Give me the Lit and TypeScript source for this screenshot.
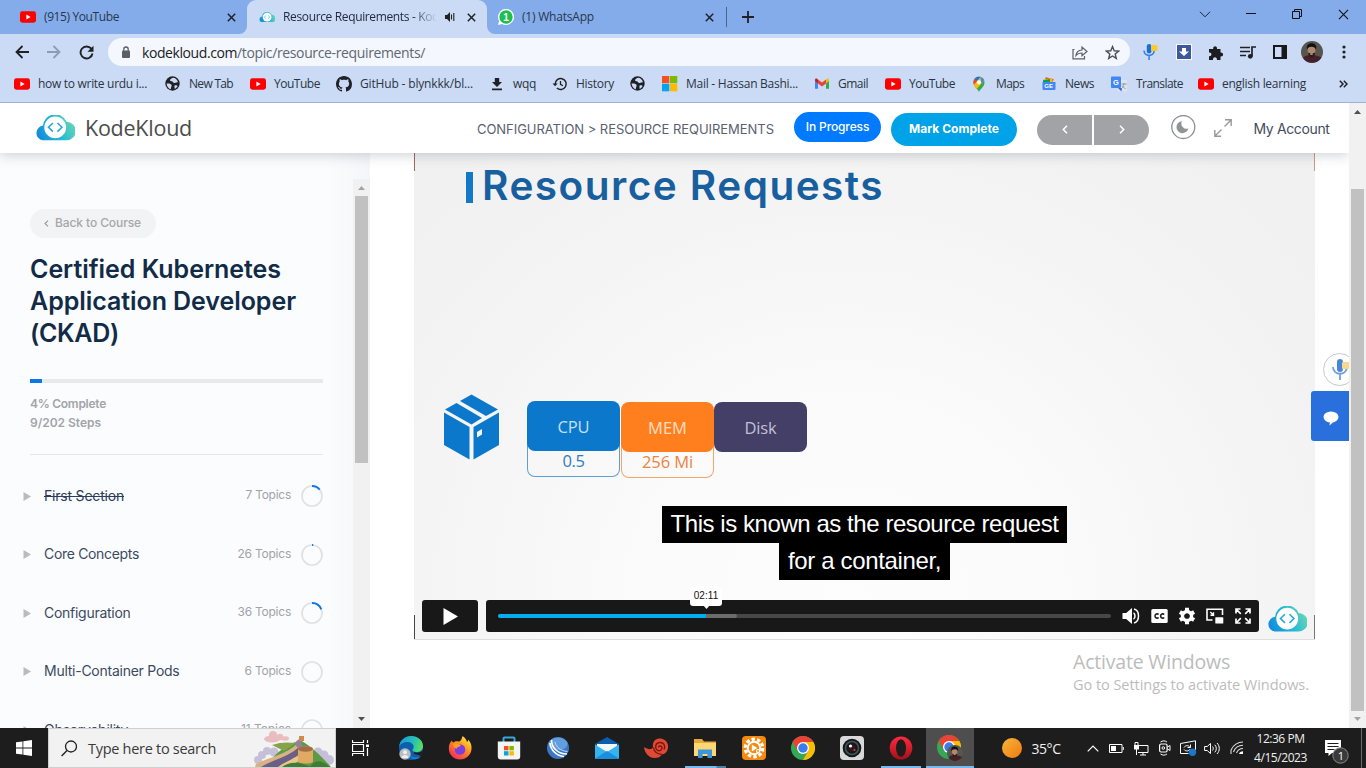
import { LitElement, html, css, svg } from "lit";
import { customElement, property } from "lit/decorators.js";

/** One line of text whose tracking is adjusted so that it spans `w` pixels. */
@customElement("fit-line")
class FitLine extends LitElement {
  @property({ type: Number }) w = 0;
  static styles = css`
    :host { display: inline-block; white-space: nowrap; flex: none; }
  `;
  firstUpdated() {
    const span = this.renderRoot.querySelector("span")!;
    const n = (this.textContent || "").length || 1;
    const natural = span.getBoundingClientRect().width;
    this.style.letterSpacing = `${(this.w - natural) / n}px`;
    this.style.width = `${this.w}px`;
  }
  render() {
    return html`<span><slot></slot></span>`;
  }
}

const icon = (w: number, h: number, body: unknown, vb = `0 0 ${w} ${h}`) =>
  html`<svg width=${w} height=${h} viewBox=${vb} fill="none">${body}</svg>`;

const youtube = () => icon(16, 16, svg`<rect y="2.3" width="16" height="11.4" rx="2.4" fill="#f00"/><path d="M6.4 5.6v4.8L10.6 8z" fill="#fff"/>`);
const globe = () => icon(16, 16, svg`<circle cx="7.500" cy="7.500" r="7.200" fill="#202124"/><path d="M1.600 7.600c2.600-.4 4.600.2 5 1.700.2 1.300-.6 1.500-.6 2.700 0 .8-.3 1.200-.8 1.200C3.300 12.500 1.800 10.300 1.600 7.600zM8 1.700c-1.600.5-3.400 1.600-3 2.800.6 1.200 2.500.2 3 1.500.4 1.200 2 1.300 3.200.6.8-.4 1.300-.2 1.700-.6C12.200 3.500 10.300 1.700 8 1.700zM9.400 9.800c1.400-.8 2.800-.4 3.200.2-.6 1.400-1.800 2.400-3 2.800z" fill="#cbdbf5"/>`);
const github = () => icon(16, 16, svg`<path fill="#1f2328" d="M8 0C3.580 0 0 3.580 0 8c0 3.540 2.290 6.530 5.470 7.590.4.070.55-.17.55-.38 0-.19-.01-.82-.01-1.490-2.010.37-2.530-.49-2.690-.94-.09-.23-.48-.94-.82-1.130-.28-.15-.68-.52-.01-.53.63-.01 1.080.58 1.230.82.72 1.210 1.870.87 2.330.66.070-.52.28-.87.51-1.070-1.780-.2-3.640-.89-3.640-3.950 0-.87.31-1.590.82-2.150-.08-.2-.36-1.020.08-2.120 0 0 .67-.21 2.200.82.64-.18 1.320-.27 2-.27s1.360.09 2 .27c1.530-1.040 2.200-.82 2.200-.82.44 1.100.16 1.920.08 2.120.51.56.82 1.270.82 2.150 0 3.070-1.870 3.750-3.650 3.950.29.25.54.73.54 1.480 0 1.070-.01 1.930-.01 2.200 0 .21.15.46.55.38A8.010 8.010 0 0 0 16 8c0-4.420-3.580-8-8-8z"/>`);
const download = () => icon(16, 16, svg`<path d="M5.800 2h4.400v4H13L8 11 3 6h2.800zM3 12.500h10v1.700H3z" fill="#202124"/>`);
const history = () => icon(16, 16, svg`<path d="M3.200 8a5.500 5.500 0 1 1 1.700 4" stroke="#202124" stroke-width="1.400"/><path d="M.5 7.500h5.200L3.100 10.300z" fill="#202124"/><path d="M8.500 5v3.400l2.400 1.400" stroke="#202124" stroke-width="1.300"/>`);
const microsoft = () => icon(16, 16, svg`<path fill="#f25022" d="M0 0h7.300v7.300H0z"/><path fill="#7fba00" d="M8 0h7.300v7.300H8z"/><path fill="#00a4ef" d="M0 8h7.300v7.300H0z"/><path fill="#ffb900" d="M8 8h7.300v7.300H8z"/>`);
const gmail = () => icon(16, 16, svg`<path d="M1 4.500v8.300h3V7.200z" fill="#4285f4"/><path d="M15 4.500v8.300h-3V7.200z" fill="#34a853"/><path d="M12 3.800v3.600l3-2.300V4c0-1.300-1.400-1.800-2.300-1z" fill="#fbbc04"/><path d="M4 7.400V3.600l4 3 4-3v3.800l-4 3z" fill="#ea4335"/><path d="M1 5v-1c0-1.300 1.400-1.800 2.300-1l.7.600v3.800z" fill="#c5221f"/>`);
const maps = () => icon(16, 16, svg`<path d="M7 16c-.7-3-5.500-5-5.500-9.600C1.500 3 4 .8 7 .8s5.500 2.200 5.500 5.600C12.500 11 7.700 13 7 16z" fill="#34a853"/><path d="M2.700 2.700 5.500 5 2 9C1 6.500 1.400 4.200 2.700 2.700z" fill="#ea4335"/><path d="M2.700 2.700C4 1 6.500.4 8.600 1L5.400 5z" fill="#1a73e8"/><path d="M8.600 1c1.700.5 3 1.700 3.600 3.200L4.700 13C3.700 11.600 2.400 10.300 1.900 8.800z" fill="#fbbc04"/><path d="M8.600 1c1.700.5 3 1.700 3.600 3.200L9 7.500z" fill="#4285f4"/><circle cx="7" cy="6.300" r="2.100" fill="#fff"/>`);
const news = () => icon(16, 16, svg`<path d="M4 2h8v6H4z" fill="#ea4335" transform="rotate(12 8 5)"/><path d="M2 3.400 11 2l1 5-9 2z" fill="#fbbc04"/><path d="M2 4.300 9 3v5H2z" fill="#0c9d58"/><path d="M1.500 6h13v7a1 1 0 0 1-1 1h-11a1 1 0 0 1-1-1z" fill="#4285f4"/><text x="3.300" y="12.400" font-size="6" font-weight="700" fill="#fff" font-family="Liberation Sans">GE</text>`);
const translate = () => icon(17, 16, svg`<rect x="6.500" y="4" width="9.500" height="11.500" rx="1" fill="#dfe3ea"/><rect x="0" y="0.500" width="10" height="11.500" rx="1" fill="#4285f4"/><path d="m7 12 3.500 3.500L11 12z" fill="#3367d6"/><text x="2" y="8.800" font-size="7.500" font-weight="700" fill="#fff" font-family="Liberation Sans">G</text><path d="M10.500 8h5M13 7v1c0 2-1.200 3.500-2.500 4.500M11 9.500c1 1.600 2 2.500 3.500 3" stroke="#8a93a3" stroke-width=".9"/>`);

const cloud = (w: number, h: number) => icon(w, h, svg`
  <defs>
    <linearGradient id="kk" x1="0" y1="23" x2="38" y2="4" gradientUnits="userSpaceOnUse"><stop offset="0" stop-color="#1384dc"/><stop offset=".5" stop-color="#1fb6da"/><stop offset="1" stop-color="#6ad8b2"/></linearGradient>
  </defs>
  <path d="M7.300 25.300A7.400 7.400 0 0 1 7.600 10.600A12.200 12.200 0 0 1 31 6.700A9.300 9.300 0 0 1 31 25.300z" fill="url(#kk)"/>
  <circle cx="19.700" cy="12.400" r="10.900" fill="#fff"/>
  <path d="m17.400 8-4.400 4.300 4.400 4.300M22 8l4.400 4.300-4.400 4.300" stroke="#27a9dc" stroke-width="1.600"/>`, "-0.5 0 40 25.500");

const cross = (s = 9, sw = 1.5, c = "#202124") => icon(s, s, svg`<path d="M.8.8 8.200 8.200M8.200.8.8 8.200" stroke=${c} stroke-width=${sw}/>`, "0 0 9 9");

const bookmarks: [() => unknown, string, number, number][] = [
  [youtube, "how to write urdu i...", 109, 151],
  [globe, "New Tab", 44, 85],
  [youtube, "YouTube", 46, 86],
  [github, "GitHub - blynkkk/bl...", 113, 153],
  [download, "wqq", 23, 63],
  [history, "History", 38, 78],
  [globe, "", 0, 32],
  [microsoft, "Mail - Hassan Bashi...", 112, 152],
  [gmail, "Gmail", 30, 71],
  [youtube, "YouTube", 46, 87],
  [maps, "Maps", 28, 69],
  [news, "News", 29, 70],
  [translate, "Translate", 47, 87],
  [youtube, "english learning", 84, 120],
];

const sections: [string, number, string, number, number, boolean][] = [
  ["First Section", 80, "7 Topics", 45.500, 0.14, true],
  ["Core Concepts", 95, "26 Topics", 53.500, 0.02, false],
  ["Configuration", 86.500, "36 Topics", 53.500, 0.19, false],
  ["Multi-Container Pods", 135.500, "6 Topics", 46.500, 0, false],
  ["Observability", 84, "11 Topics", 50, 0, false],
];

const chromeMark = svg`
  <circle cx="12" cy="12" r="12" fill="#34a853"/>
  <path d="M12 6h10.400A12 12 0 0 1 12 24l5.200-9z" fill="#fbbc04"/>
  <path d="M1.600 6 6.800 15 12 12 12 6 22.400 6A12 12 0 0 0 1.600 6z" fill="#ea4335"/>
  <circle cx="12" cy="12" r="6" fill="#fff"/><circle cx="12" cy="12" r="4.700" fill="#3b7ded"/>`;

const face = svg`
  <circle cx="11" cy="11" r="11" fill="#56564e"/>
  <path d="M2 17c3-3 5-3 9-3s6.500 1 9.500 2.500A11 11 0 0 1 2 17z" fill="#43202a"/>
  <ellipse cx="10.500" cy="9.500" rx="3.900" ry="5.300" fill="#b08871"/>
  <path d="M6 8.500C5 3.500 8 2 11 2.200c3.500.2 5 2.800 4 6.300-1-2-1.800-2.800-4.500-2.800S7 6.700 6 8.500z" fill="#15110f"/>
  <path d="M7 11.500c1 1 6 1 7.200 0-.2 3-1.700 5-3.600 5s-3.300-2-3.600-5z" fill="#2c1d18"/><ellipse cx="10.500" cy="13" rx="1.600" ry="1" fill="#b08871"/>`;

const apps: { art: unknown; bar?: string; active?: boolean }[] = [
  { art: icon(24, 24, svg`<defs><linearGradient id="eg" x1="2" y1="4" x2="23" y2="12" gradientUnits="userSpaceOnUse"><stop stop-color="#1a9fd9"/><stop offset=".6" stop-color="#2bc3b0"/><stop offset="1" stop-color="#5fe05a"/></linearGradient></defs><circle cx="12" cy="12" r="12" fill="#0e5eb0"/><path d="M0 11C1 4 6 0 12 0c7 0 12 4.500 12 10 0 4-3 6-6.500 6-3 0-4-1-4-2 0-.8 1.200-1.200 1.200-3C14.700 8 12 6 8.500 6 4.500 6 1 8 0 11z" fill="url(#eg)"/><path d="M15 16c3 1.500 7 .5 9-2-.5 2-1 3.500-2.500 5.500L15 18z" fill="#1d1d1d"/><path d="M8 13c0 5 4 8.500 8.500 8.500 2 0 4-.5 5.500-1.500-1 1.500-2 2.400-4 3C12 24 8 19 8 13z" fill="#1887d6"/><circle cx="6" cy="18" r="5.700" fill="#b9bcc0"/><circle cx="6" cy="16.200" r="2" fill="#eee"/><path d="M2.500 22c.5-4 6.500-4 7 0z" fill="#eee"/>`) },
  { art: icon(24, 24, svg`<defs><linearGradient id="ff" x1="20" y1="2" x2="5" y2="22" gradientUnits="userSpaceOnUse"><stop stop-color="#ffe23a"/><stop offset=".45" stop-color="#ff8a1f"/><stop offset="1" stop-color="#f42d5a"/></linearGradient></defs><path d="M14.500 0c3 2 4 4 4.500 6 1-.5 1.200-1.500 1-2.500 3 3 3.800 6 3.500 9.500C23 19 18 23.500 12 23.500S.8 19 .8 12.500C.8 9 2 6 4 4.500c0 1 .5 1.800 1.300 2C7 5 9 5 10.500 5.500c2 .5 3.500-3 4-5.500z" fill="url(#ff)"/><circle cx="12" cy="13.500" r="5.300" fill="#7a3fe0"/><path d="M5 8c3-1 5 0 7 .5 1 .5 1 1.500-.5 2-2 .7-3 1-3 2.500-1-.8-3.500-2-3.500-5z" fill="#ff9a22"/>`) },
  { art: icon(24, 24, svg`<path d="M6.500 6V2.500a1 1 0 0 1 1-1h9a1 1 0 0 1 1 1V6" stroke="#35a8dd" stroke-width="2"/><path d="M.8 5.500h22.400v15a3 3 0 0 1-3 3H3.800a3 3 0 0 1-3-3z" fill="#f4f4f4"/><path d="M7 10h4.500v4.300H7z" fill="#f25022"/><path d="M12.400 10h4.500v4.300h-4.500z" fill="#7fba00"/><path d="M7 15.200h4.500v4.300H7z" fill="#00a4ef"/><path d="M12.400 15.200h4.500v4.300h-4.500z" fill="#ffb900"/>`) },
  { art: icon(24, 24, svg`<circle cx="12" cy="12" r="11" fill="#3a78c6"/><ellipse cx="12" cy="8" rx="9.500" ry="6.500" fill="#629ddd"/><path d="M5.500 4c0 8 6.500 14 15.500 14M4 7c.5 7 6.500 13 14 13.500" stroke="#fff" stroke-width="1.600"/><path d="M9 6c1 5 5.500 9 12.500 9.500" stroke="#c4dcf4" stroke-width="1"/>`) },
  { art: icon(24, 24, svg`<path d="M0 8 12 1l12 7v3H0z" fill="#0b5cae"/><path d="M2 8h20v9H2z" fill="#f2f6fa"/><path d="M0 8.500 12 16l12-7.500V22a1 1 0 0 1-1 1H1a1 1 0 0 1-1-1z" fill="#35b4ee"/><path d="M0 22.500 12 15l12 7.500a1 1 0 0 1-1 .5H1z" fill="#1a8fdc"/>`) },
  { art: icon(24, 24, svg`<path d="M0 11c4 2.500 7 3 9 .5C8 5 12 2 17 2.500c5 1 7.500 5 7 9C23.500 16 21 18 18 18.500c-1.500 2.500-4 3.500-7.500 3.500C5 22 .5 17 0 11z" fill="#e04a35"/><path d="M9.500 11.500c.5 4 3 6.500 8.500 7M20 13.500c2-4-.5-7.500-4.500-7-4 .5-5 5-2.500 7.500 2.500 1.800 5.500 0 5-2.500-.5-2-3.500-2-3.500 0" stroke="#7d150f" stroke-width="1.400"/>`) },
  { art: icon(24, 24, svg`<path d="M1 3h8l2 2.500h12V20H1z" fill="#e8a93b"/><path d="M1 7h22v13H1z" fill="#fbd775"/><path d="M5 13.500h14V22h-4.500v-4h-5v4H5z" fill="#3c96dc"/>`), bar: "split" },
  { art: icon(24, 24, svg`<rect width="24" height="24" rx="4" fill="#f58a12"/><circle cx="12" cy="12" r="6.200" stroke="#fff" stroke-width="2"/><circle cx="12" cy="12" r="8.800" stroke="#fff" stroke-width="3.200" stroke-dasharray="3.400 2.130"/><path d="M9.800 8.500v7l5.500-3.500z" fill="#fff"/><circle cx="16" cy="15" r="2" fill="#fff"/><circle cx="16" cy="15" r=".9" fill="#f58a12"/>`) },
  { art: icon(24, 24, chromeMark) },
  { art: icon(24, 24, svg`<rect width="24" height="24" rx="4" fill="#d9d9d9"/><circle cx="12" cy="12" r="9.300" fill="#171717"/><circle cx="12" cy="12" r="6.500" stroke="#3d5a60" stroke-width="1.500"/><circle cx="12" cy="12" r="3.500" fill="#341719"/><circle cx="10.500" cy="10" r="1.600" fill="#fff"/><circle cx="14.500" cy="14" r="1" fill="#d3404a"/>`) },
  { art: icon(24, 24, svg`<defs><linearGradient id="op" x1="0" y1="0" x2="0" y2="1"><stop stop-color="#ff2b3d"/><stop offset="1" stop-color="#a80f1c"/></linearGradient></defs><ellipse cx="12" cy="12" rx="11.300" ry="11.500" fill="url(#op)"/><ellipse cx="12" cy="12" rx="5" ry="8.800" fill="#1d1d1d"/>`), bar: "mid" },
  { art: icon(26, 26, svg`<g>${chromeMark}</g><g transform="translate(10 10) scale(.73)">${face}</g>`), bar: "wide", active: true },
];

const wall = () => icon(80, 38, svg`
  <g fill="#e9bcc0"><ellipse cx="18" cy="10" rx="8" ry="3.500"/><circle cx="19" cy="6" r="4"/><circle cx="26" cy="8" r="3.200"/><ellipse cx="31" cy="9.500" rx="4" ry="2.200"/></g>
  <g fill="#c6bfd8"><circle cx="8" cy="26" r="4"/><circle cx="13" cy="22" r="4"/><circle cx="20" cy="23" r="4.500"/><circle cx="64" cy="23" r="4.500"/><circle cx="70" cy="26" r="4.500"/><circle cx="75" cy="31" r="5"/><circle cx="4" cy="31" r="4"/></g>
  <path d="M12 38C20 25 34 13 47 12c9 4 20 15 30 26z" fill="#5c9a46"/>
  <path d="M18 16c8-3 16-3 24-2L30 22z" fill="#87a34a"/>
  <path d="M2 35C16 28 33 25 44 14l3 2C39 27 22 30 10 38H1z" fill="#d9b184"/>
  <path d="M7 38C20 30 36 28 47 16l4 4C44 29 34 31 26 38z" fill="#6b5f86"/>
  <path d="M24 38c8-6 19-9 27-17l2 2c-5 8-12 11-17 15z" fill="#e9c58d"/>
  <path d="M41 14c2-3 6-6 9-4l-3 5 7 6-4 3-8-7z" fill="#8f8399"/><path d="M45 7h5v5h-5z" fill="#cf8b4c"/>
  <path d="M44 20c0-3.500 15-3.500 15 0v13c-3 2-12 2-15 0z" fill="#e0aa64"/><ellipse cx="51.500" cy="20" rx="7.500" ry="2.700" fill="#a36e45"/>
  <path d="M56 38c4-7 11-8 20 0z" fill="#3f7d35"/><path d="M28 38c5-4 14-6 24-2l6 2z" fill="#3f7d35"/>`);

const arrow = (dir: "up" | "down", c: string) =>
  icon(7, 4, dir === "up" ? svg`<path d="M0 4 3.500 0 7 4z" fill=${c}/>` : svg`<path d="M0 0h7L3.500 4z" fill=${c}/>`);

@customElement("app-root")
class AppRoot extends LitElement {
  static styles = css`
    :host { display: flex; flex-direction: column; width: 1366px; height: 768px; overflow: hidden; background: #fff; font-family: "Open Sans", "Noto Sans", sans-serif; font-size: 12px; color: #26303d; }
    * { box-sizing: border-box; }
    svg { display: block; flex: none; }
    .center { display: flex; align-items: center; justify-content: center; }

    .tabs { display: flex; height: 34px; background: #85acea; flex: none; }
    .tab { display: flex; align-items: center; height: 34px; flex: none; }
    .tab fit-line { margin-left: 8px; padding-bottom: 1px; color: #26374f; }
    .t1 { width: 247px; padding-left: 20px; border-bottom-right-radius: 8px; background: #85acea; }
    .t1 fit-line { margin-right: 108px; }
    .corner-bg { background: #cbdbf5; }
    .t2 { width: 240px; padding-left: 12px; background: #cbdbf5; border-radius: 9px 9px 0 0; }
    .t2wrap { background: #85acea; }
    .fade { margin-left: 8px; width: 154px; overflow: hidden; -webkit-mask-image: linear-gradient(90deg, #000 84%, transparent 100%); mask-image: linear-gradient(90deg, #000 84%, transparent 100%); }
    .fade fit-line { margin: 0; color: #202c3e; }
    .speaker { margin: 0 12px 0 8px; }
    .t3 { width: 239px; padding-left: 11px; border-bottom-left-radius: 8px; background: #85acea; }
    .t3 fit-line { margin-right: 111px; }
    .tabsep { width: 1px; height: 20px; margin: 7px 15px 0 0; background: #4a6593; }
    .newtab { margin-top: 11px; }
    .winbtns { display: flex; margin-left: auto; height: 28px; }
    .winbtns .center { width: 46px; }

    .toolbar { display: flex; align-items: center; height: 34px; padding: 2px 0 0 6px; background: #cbdbf5; flex: none; }
    .slot { width: 32px; height: 32px; }
    .omni { display: flex; align-items: center; width: 1022px; height: 28px; margin: 0 4px 0 6px; padding: 0 2px 0 13px; border-radius: 14px; background: #f4f7fd; font-size: 14px; color: #5f6873; }
    .omni .host { margin-left: 11px; color: #202124; }
    .omni .share { margin-left: auto; }
    .mic { margin-right: 2px; }

    .bookmarks { display: flex; align-items: center; height: 35px; padding: 0 0 2px 14px; background: #cbdbf5; border-bottom: 1px solid #9fb2d3; flex: none; color: #2a3442; }
    .bm { display: flex; align-items: center; gap: 8px; flex: none; }
    .bm fit-line { padding-bottom: 1px; }
    .more { margin-left: 21px; }

    .page { display: flex; height: 625px; flex: none; background: #fff; }
    .view { display: flex; flex-direction: column; width: 1349px; position: relative; overflow: hidden; font-family: Inter, sans-serif; }
    .pscroll { display: flex; flex-direction: column; align-items: center; width: 17px; background: #f1f1f1; padding: 7px 0; }
    .pscroll .thumb { width: 13px; height: 522px; margin: 75px 0 6px; background: #c1c1c1; }

    .head { display: flex; align-items: center; height: 50px; padding-left: 35px; background: #fff; box-shadow: 0 2px 12px rgba(30, 40, 60, .22); position: relative; z-index: 2; flex: none; }
    .brand { margin: 0 285px 0 10px; padding-bottom: 1px; font: 400 21.500px "Open Sans", sans-serif; color: #4c4c4c; }
    .crumb { font-size: 13px; color: #596170; padding-top: 2px; }
    .status { width: 87px; height: 30px; margin: 0 10px 2px 20px; padding-bottom: 1px; border-radius: 15px; background: #007bff; color: #fff; font-weight: 500; }
    .mark { width: 126px; height: 33px; margin-top: 2px; padding-bottom: 1px; border-radius: 17px; background: #00a2e8; color: #fff; font-weight: 700; }
    .pn { height: 30px; margin-top: 3px; background: #a2a3a6; }
    .prev { width: 55px; margin-left: 20px; margin-right: 2px; border-radius: 15px 0 0 15px; }
    .next { width: 55px; margin-right: 21px; border-radius: 0 15px 15px 0; }
    .expand { margin: 0 21.500px 0 18px; }
    .acct { font-size: 14px; color: #3f4c60; }

    .body { display: flex; height: 575px; flex: none; }
    .side { display: flex; width: 370px; height: 575px; overflow: hidden; background: linear-gradient(90deg, #fbfcfe 88%, #f4f6f9); flex: none; }
    .course { width: 353px; padding: 56px 30px 0; }
    .back { display: flex; align-items: center; width: 126px; height: 29px; padding: 0 0 1px 14px; border-radius: 15px; background: #f2f3f4; color: #a6a7ab; font-weight: 500; }
    .back fit-line { margin-left: 6px; padding-bottom: 1px; }
    .title { margin-top: 15px; font-size: 25px; font-weight: 600; line-height: 32px; color: #122b46; height: 96px; }
    .title fit-line { display: block; }
    .bar { height: 4px; margin-top: 30px; background: #e8e9eb; }
    .bar .fill { width: 12px; height: 4px; background: #0c77e8; }
    .meta { margin-top: 11px; height: 61px; line-height: 19px; font-weight: 600; color: #a2a4a9; border-bottom: 1px solid #e3e6ea; }
    .list { margin: 12px 0 0 -7px; width: 300px; }
    .row { display: flex; align-items: center; height: 58.500px; font-size: 14px; color: #3b4a60; }
    .row .name { margin-left: 13px; padding-bottom: 2px; }
    .row .done { text-decoration: line-through; color: #2b3d58; }
    .row .topics { margin-left: auto; margin-right: 10px; padding-bottom: 3px; font-size: 12px; color: #a1a3a8; }
    .sscroll { display: flex; flex-direction: column; align-items: center; width: 17px; margin-top: 26px; padding: 7px 0; background: #f1f1f1; height: 549px; }
    .sscroll .thumb { width: 13px; height: 267px; margin: 6px 0 auto; background: #c1c1c1; }

    .video { width: 901px; height: 487px; margin-left: 44px; padding-top: 9px; border-bottom: 1px solid #dedede; background: linear-gradient(#a4685a, #a4685a) 0 0 / 1px 18px no-repeat, linear-gradient(#d49a80, #d49a80) 100% 0 / 1px 18px no-repeat, linear-gradient(#444, #444) 0 100% / 1px 24px no-repeat, linear-gradient(#777, #777) 100% 100% / 1px 24px no-repeat, radial-gradient(ellipse 600px 560px at 48% 92%, #fdfdfd 0%, #fafafa 40%, #f4f4f4 72%, #f1f1f1 100%); }
    .slide { display: flex; height: 48px; align-items: center; padding-left: 52px; font-size: 40.500px; font-weight: 600; line-height: 48px; color: #175f9f; }
    .slide .stroke { width: 7px; height: 31px; margin: 3px 9px 0 0; background: #1478c8; }
    .res { display: flex; height: 90px; margin-top: 184px; padding-left: 30px; }
    .res .box { margin-right: 28px; }
    .chipcol { width: 93px; padding-top: 8px; }
    .chipcol.cpu { width: 94px; padding-top: 7px; }
    .chip { width: 93px; height: 50px; border-radius: 8px; font: 500 16.500px "Open Sans", sans-serif; position: relative; }
    .val { width: 93px; height: 34px; margin-top: -8px; padding-top: 1px; border: 1px solid; border-top: 0; border-radius: 0 0 8px 8px; font: 500 16.500px "Open Sans", sans-serif; }
    .cpu .chip { background: #0c78cb; color: #c4e0f5; }
    .cpu .val { border-color: #5a9fd6; color: #2f7dc0; }
    .mem .chip { background: #ff7f1e; color: #ffdfc2; }
    .mem .val { border-color: #f7a468; color: #ec8340; }
    .disk .chip { background: #443f66; color: #c2bfd6; }
    .capt { display: flex; flex-direction: column; align-items: center; height: 74px; margin-top: 22px; font: 24px "Liberation Sans", Arial, sans-serif; color: #fff; }
    .capt div { height: 37px; padding-bottom: 2px; background: #000; }
    .c1 { width: 405px; } .c2 { width: 171px; }
    .ctl { display: flex; height: 32px; margin-top: 20px; padding-left: 8px; }
    .play { width: 56px; border-radius: 3px; background: #181818; margin-right: 8px; }
    .scrub { display: flex; align-items: center; width: 773px; padding-left: 12px; border-radius: 3px; background: #181818; margin-right: 8px; }
    .track { display: flex; width: 613px; height: 4px; margin-right: 6px; border-radius: 2px; background: #474747; position: relative; flex: none; }
    .played { width: 208px; background: #00adef; border-radius: 2px 0 0 2px; }
    .buffered { width: 31px; background: #6c6c6c; border-radius: 0 2px 2px 0; }
    .tip { position: absolute; left: 192px; top: -28px; width: 32px; height: 20px; padding-bottom: 1px; border-radius: 3px; background: #fff; color: #111; font: 10px "Liberation Sans", sans-serif; }
    .tip svg { position: absolute; top: 19px; left: 12.500px; }
    .ci { width: 28px; }
    .brandv { padding-top: 6px; }

    .voice { position: absolute; left: 1323px; top: 250px; width: 33px; height: 33px; border: 1px solid #c8c8c8; border-radius: 50%; background: #fff; }
    .chat { position: absolute; left: 1311px; top: 288px; width: 38px; height: 50px; border-radius: 3px 0 0 3px; background: #2a70dd; padding: 5px 0 0 2px; }
    .activate { position: absolute; left: 1073px; top: 547px; display: flex; flex-direction: column; font-family: "Open Sans", sans-serif; color: #bcbcbc; }
    .a1 { font-size: 19.500px; line-height: 24px; }
    .a2 { font-size: 14.500px; line-height: 22px; }

    .task { display: flex; align-items: stretch; height: 40px; background: #1d1d1d; flex: none; color: #f0f0f0; }
    .start { width: 48px; }
    .search { display: flex; align-items: center; width: 288px; padding-left: 12px; border: 1px solid #cfcfcf; background: #f2f2f2; color: #3a3a3a; font-size: 14.500px; overflow: hidden; }
    .search fit-line { margin: 0 38px 0 11px; }
    .tview { width: 50.500px; padding-right: 2px; }
    .app { width: 49px; position: relative; }
    .app.active { width: 48px; background: #4e4e4e; }
    .u { position: absolute; bottom: 0; height: 2px; background: #76b9ed; }
    .u.split { left: 4px; width: 41px; background: linear-gradient(90deg, #76b9ed 31px, #4f7da3 32px); }
    .u.mid { left: 4.500px; width: 40px; }
    .u.wide { left: 0; width: 48px; }
    .weather { margin-left: 28px; }
    .temp { margin: 0 20px 0 10px; font-size: 14px; align-self: center; }
    .tray { display: flex; align-items: center; }
    .tray .center { width: 24px; }
    .clock { display: flex; flex-direction: column; align-items: center; width: 54px; margin-left: 5px; padding-top: 2px; line-height: 18.500px; font-size: 12px; }
    .note { margin-left: 17px; padding-top: 11px; }
    .edge { width: 1px; margin-left: auto; margin-right: 4px; background: #6a6a6a; }
  `;

  render() {
    return html`${this.browser()}
      <div class="page">
        <div class="view">
          ${this.header()}
          <div class="body">${this.sidebar()}${this.video()}</div>
          <div class="voice center">${icon(18, 22, svg`<rect x="6" y="0" width="6" height="13" rx="3" fill="#4a86d8"/><path d="M2 8c0 9 14 9 14 0M9 15v6" stroke="#6ea0e0" stroke-width="1.800"/><rect x="11" y="3" width="7" height="7" rx="1" fill="#f6d98a"/>`)}</div>
          <div class="chat center">${icon(16, 15, svg`<ellipse cx="8" cy="6" rx="7.500" ry="5.500" fill="#fff"/><path d="M7 10.500 6.500 14.500l5-4.500z" fill="#fff"/>`)}</div>
          <div class="activate"><fit-line class="a1" w="157">Activate Windows</fit-line><fit-line class="a2" w="236">Go to Settings to activate Windows.</fit-line></div>
        </div>
        <div class="pscroll">${arrow("up", "#505050")}<div class="thumb"></div>${arrow("down", "#a3a3a3")}</div>
      </div>
      ${this.taskbar()}`;
  }

  browser() {
    return html`
      <div class="tabs">
        <div class="corner-bg"><div class="tab t1">${youtube()}<fit-line w="75">(915) YouTube</fit-line>${cross()}</div></div>
        <div class="t2wrap"><div class="tab t2">${cloud(16, 10.500)}
          <div class="fade"><fit-line w="156">Resource Requirements - Kod</fit-line></div>
          <div class="speaker">${icon(10, 10, svg`<path d="M0 3h2l3-3v10L2 7H0z" fill="#202124"/><path d="M6.500 2.500v5M8.800 1v8" stroke="#202124" stroke-width="1.100"/>`)}</div>${cross()}</div></div>
        <div class="corner-bg"><div class="tab t3">${icon(16, 16, svg`<path d="M0 16 1.100 12A8 8 0 1 1 4 14.900z" fill="#fff"/><circle cx="8" cy="8" r="6.700" fill="#1fbf4f"/><text x="5.300" y="11.600" font-size="10" font-weight="700" fill="#fff" font-family="Liberation Sans">1</text>`)}<fit-line w="72">(1) WhatsApp</fit-line>${cross()}</div></div>
        <div class="tabsep"></div>
        <div class="newtab">${icon(12, 12, svg`<path d="M6 0v12M0 6h12" stroke="#202124" stroke-width="1.800"/>`)}</div>
        <div class="winbtns">
          <div class="center">${icon(12, 7, svg`<path d="m1 .8 5 5 5-5" stroke="#1a2536"/>`)}</div>
          <div class="center">${icon(10, 2, svg`<path d="M0 .5h10" stroke="#111"/>`)}</div>
          <div class="center">${icon(10, 10, svg`<path d="M.5 2.500h7v7h-7zM2.500 2.500v-2h7v7h-2" stroke="#111"/>`)}</div>
          <div class="center">${cross(11, 0.9, "#111")}</div>
        </div>
      </div>
      <div class="toolbar">
        <div class="slot center">${icon(14, 14, svg`<path d="M14 7H1.500M7.500 1l-6 6 6 6" stroke="#202124" stroke-width="1.800"/>`)}</div>
        <div class="slot center">${icon(14, 14, svg`<path d="M0 7h12.500M6.500 1l6 6-6 6" stroke="#8d9bb4" stroke-width="1.800"/>`)}</div>
        <div class="slot center">${icon(15, 15, svg`<path d="M12.300 3.700A6 6 0 1 0 13.500 8.500" stroke="#202124" stroke-width="1.900"/><path d="M14.500.8v6h-6z" fill="#202124"/>`)}</div>
        <div class="omni">
          ${icon(10, 13, svg`<rect x="1" y="4.500" width="8" height="7.500" rx="1" fill="#5a6068"/><path d="M2.800 5V3.200a2.200 2.200 0 0 1 4.400 0V5" stroke="#5a6068" stroke-width="1.300"/>`)}
          <fit-line class="host" w="95">kodekloud.com</fit-line><fit-line w="188">/topic/resource-requirements/</fit-line>
          <div class="slot center share">${icon(16, 15, svg`<path d="M2.500 4.500H1v9.300h11.500V11" stroke="#5a6068" stroke-width="1.200"/><path d="M4 10.500c.3-3.500 2.500-5.300 6-5.500V2l5 4.500-5 4.300V8C7.500 8 5.500 8.600 4 10.500z" stroke="#5a6068" stroke-width="1.200"/>`)}</div>
          <div class="slot center">${icon(15, 15, svg`<path d="m7.500 1.600 1.700 4.200 4.500.3-3.500 2.900 1.100 4.400-3.800-2.400-3.800 2.400L4.800 9 1.300 6.100l4.500-.3z" stroke="#4a5058" stroke-width="1.400"/>`)}</div>
        </div>
        <div class="slot center mic">${icon(15, 16, svg`<rect x="3.800" y="0" width="4.600" height="9.500" rx="2.300" fill="#1a6fe0"/><path d="M1 6.500c0 6.500 10.200 6.500 10.200 0M6.100 11.500V16" stroke="#2f7de4" stroke-width="1.500"/><rect x="8" y="1" width="6.500" height="6" rx="1" fill="#fccb27"/>`)}</div>
        <div class="slot center">${icon(16, 16, svg`<rect width="16" height="16" rx="1" fill="#fff"/><rect x="1" y="1" width="14" height="14" fill="#3c599e"/><path d="M6 4h4v3.500h3L8 12 3 7.500h3z" fill="#fff"/>`)}</div>
        <div class="slot center">${icon(16, 15, svg`<path d="M1 4h4.200C4.500.2 9.700.2 9 4H12.500v3.500c3.500-.3 3.500 4.300 0 4V15H9c.3-3.600-4.500-3.600-4 0H1v-3.800c3.300.3 3.300-4 0-3.700z" fill="#1b1d21"/>`)}</div>
        <div class="slot center">${icon(16, 13, svg`<path d="M0 1.500h10M0 5.500h10M0 9.500h6" stroke="#202124" stroke-width="1.700"/><path d="M12 10V1h4" stroke="#202124" stroke-width="1.700"/><circle cx="10.300" cy="10.300" r="2.400" fill="#202124"/>`)}</div>
        <div class="slot center">${icon(14, 14, svg`<path d="M1 1h12v12H1z" stroke="#16181c" stroke-width="2"/><path d="M8.500 0H14v14H8.500z" fill="#16181c"/>`)}</div>
        <div class="slot center">${icon(22, 22, face)}</div>
        <div class="slot center">${icon(4, 14, svg`<g fill="#202124"><circle cx="2" cy="2" r="1.600"/><circle cx="2" cy="7" r="1.600"/><circle cx="2" cy="12" r="1.600"/></g>`)}</div>
      </div>
      <div class="bookmarks">
        ${bookmarks.map(([art, label, w, span]) => html`<div class="bm" style="width:${span}px">${art()}${label ? html`<fit-line w=${w}>${label}</fit-line>` : ""}</div>`)}
        <div class="more">${icon(9, 8, svg`<path d="m.8.8 3.200 3.200L.8 7.200M4.800.8 8 4 4.800 7.200" stroke="#202124" stroke-width="1.500"/>`)}</div>
      </div>`;
  }

  header() {
    return html`<div class="head">
      ${cloud(40, 25.500)}
      <fit-line class="brand" w="107">KodeKloud</fit-line>
      <fit-line class="crumb" w="297">CONFIGURATION &gt; RESOURCE REQUIREMENTS</fit-line>
      <div class="status center"><fit-line w="63.500">In Progress</fit-line></div>
      <div class="mark center"><fit-line w="90">Mark Complete</fit-line></div>
      <div class="pn prev center">${icon(6, 9, svg`<path d="M5 .8 1.300 4.500 5 8.200" stroke="#fff" stroke-width="1.500"/>`)}</div>
      <div class="pn next center">${icon(6, 9, svg`<path d="m1 .8 3.700 3.700L1 8.200" stroke="#fff" stroke-width="1.500"/>`)}</div>
      ${icon(26, 26, svg`<circle cx="13.300" cy="12" r="11.500" stroke="#8d8e91" stroke-width="1.300"/><path d="M12 6.200a5.200 5.200 0 0 0 6.300 7.300A6 6 0 1 1 12 6.200z" fill="#929396"/>`)}
      <div class="expand">${icon(18, 18, svg`<path d="M11 .8h6.200V7M17 1l-6.500 6.500M7 17.200H.8V11M1 17l6.500-6.500" stroke="#98999c" stroke-width="1.400"/>`)}</div>
      <fit-line class="acct" w="76">My Account</fit-line>
    </div>`;
  }

  sidebar() {
    const c = 2 * Math.PI * 10;
    return html`<div class="side">
      <div class="course">
        <div class="back">${icon(5, 7, svg`<path d="M4 .6 1 3.500l3 2.900" stroke="#999" stroke-width="1.100"/>`)}<fit-line w="86">Back to Course</fit-line></div>
        <div class="title"><fit-line w="251">Certified Kubernetes</fit-line><fit-line w="266">Application Developer</fit-line><fit-line w="89">(CKAD)</fit-line></div>
        <div class="bar"><div class="fill"></div></div>
        <div class="meta"><fit-line w="76">4% Complete</fit-line><br /><fit-line w="71">9/202 Steps</fit-line></div>
        <div class="list">
          ${sections.map(([name, w, topics, tw, part, done]) => html`<div class="row">
            ${icon(8, 9, svg`<path d="M.5 0 8 4.500.5 9z" fill="#b9bbbe"/>`)}
            <fit-line class="name ${done ? "done" : ""}" w=${w}>${name}</fit-line>
            <fit-line class="topics" w=${tw}>${topics}</fit-line>
            ${icon(22, 22, svg`<circle cx="11" cy="11" r="10" stroke="#dfe1e5" stroke-width="1.700"/>${part ? svg`<circle cx="11" cy="11" r="10" stroke="#0c77e8" stroke-width="1.900" stroke-dasharray="${c * part} ${c}" transform="rotate(-90 11 11)"/>` : ""}`)}
          </div>`)}
        </div>
      </div>
      <div class="sscroll">${arrow("up", "#a3a3a3")}<div class="thumb"></div>${arrow("down", "#505050")}</div>
    </div>`;
  }

  video() {
    return html`<div class="video">
      <div class="slide"><div class="stroke"></div><fit-line w="402">Resource Requests</fit-line></div>
      <div class="res">
        <div class="box">${icon(55, 66, svg`<g fill="#0c78cb"><path d="M0 18.500 25.500 33v32.500L0 51z"/><path d="M55 18.500 29.500 33v32.500L55 51z"/><path d="M1 15.500 12.500 9 38 24l-10.500 6.500z"/><path d="M16 7 27.500.5 54 15.500 42 22z"/></g><path d="m33 38 5-3v5.500l-5 3z" fill="#f4f4f4"/>`)}</div>
        <div class="chipcol cpu"><div class="chip center"><fit-line w="32">CPU</fit-line></div><div class="val center"><fit-line w="22">0.5</fit-line></div></div>
        <div class="chipcol mem"><div class="chip center"><fit-line w="39">MEM</fit-line></div><div class="val center"><fit-line w="51">256 Mi</fit-line></div></div>
        <div class="chipcol disk"><div class="chip center"><fit-line w="32">Disk</fit-line></div></div>
      </div>
      <div class="capt"><div class="c1 center"><fit-line w="388">This is known as the resource request</fit-line></div><div class="c2 center"><fit-line w="153">for a container,</fit-line></div></div>
      <div class="ctl">
        <div class="play center">${icon(15, 17, svg`<path d="M.5 0 15 8.500.5 17z" fill="#fff"/>`)}</div>
        <div class="scrub">
          <div class="track"><div class="played"></div><div class="buffered"></div>
            <div class="tip center"><fit-line w="24.500">02:11</fit-line>${icon(7, 4, svg`<path d="M0 0h7L3.500 4z" fill="#fff"/>`)}</div></div>
          <div class="ci center">${icon(18, 18, svg`<path d="M.5 6h3.700L10 1v16L4.200 12H.5z" fill="#fff"/><path d="M11.500 6c2 1 2 5 0 6M12 2c6 1.500 6 12.500 0 14" stroke="#fff" stroke-width="1.500"/>`)}</div>
          <div class="ci center">${icon(17, 14, svg`<rect x=".3" width="16.400" height="14" rx="1.500" fill="#fff"/><path d="M7.600 5.600c-1.200-1.300-3.600-.8-3.600 1.400s2.400 2.700 3.600 1.400M13.200 5.600c-1.200-1.300-3.600-.8-3.600 1.400s2.400 2.700 3.600 1.400" stroke="#181818" stroke-width="1.500"/>`)}</div>
          <div class="ci center">${icon(18, 18, svg`<circle cx="9" cy="9" r="4.400" stroke="#fff" stroke-width="3.600"/><g stroke="#fff" stroke-width="4"><path d="M9 .8v3M9 14.200v3M1.900 4.900l2.600 1.500M13.500 11.600l2.600 1.500M1.900 13.100l2.600-1.500M13.500 6.400l2.600-1.500"/></g><circle cx="9" cy="9" r="2.600" fill="#181818"/>`)}</div>
          <div class="ci center">${icon(18, 16, svg`<path d="M6.500 12H1V1.200h15.500V7" stroke="#fff" stroke-width="1.600"/><rect x="9.300" y="9.300" width="8" height="6.200" rx=".6" fill="#fff"/><path d="m4.300 4 3 3M7.500 4.300v3h-3" stroke="#fff" stroke-width="1.400"/>`)}</div>
          <div class="ci center">${icon(16, 16, svg`<path d="M1 5.500V1h4.500M10.500 1H15v4.500M15 10.500V15h-4.500M5.500 15H1v-4.500M1 1l4.800 4.800M15 1l-4.800 4.800M15 15l-4.800-4.800M1 15l4.800-4.800" stroke="#fff" stroke-width="1.700"/>`)}</div>
        </div>
        <div class="brandv">${cloud(40, 26)}</div>
      </div>
    </div>`;
  }

  taskbar() {
    return html`<div class="task">
      <div class="start center">${icon(16, 16, svg`<path fill="#fff" d="M0 2.300 6.500 1.400v6.200H0zM7.300 1.300 16 0v7.600H7.300zM0 8.400h6.500v6.200L0 13.700zM7.300 8.400H16V16l-8.700-1.200z"/>`)}</div>
      <div class="search">${icon(16, 17, svg`<circle cx="10" cy="6.500" r="5.500" stroke="#222" stroke-width="1.300"/><path d="M6 10.500.6 16" stroke="#222" stroke-width="1.400"/>`)}<fit-line w="128">Type here to search</fit-line>${wall()}</div>
      <div class="tview center">${icon(17, 16, svg`<path d="M.5 0v2.500h11V0M.5 16v-2.500h11V16M.5 4.500h11v7H.5zM15.500 0v3M15.500 8v8" stroke="#fff" stroke-width="1.200"/><path d="M14 4.500h3v2.500h-3z" fill="#fff"/>`)}</div>
      ${apps.map((a) => html`<div class="app center ${a.active ? "active" : ""}">${a.art}${a.bar ? html`<div class="u ${a.bar}"></div>` : ""}</div>`)}
      <div class="weather center">${icon(20, 20, svg`<defs><linearGradient id="sun" x1="0" y1="0" x2="1" y2="1"><stop stop-color="#f9b53a"/><stop offset="1" stop-color="#ee7a10"/></linearGradient></defs><circle cx="10" cy="10" r="10" fill="url(#sun)"/>`)}</div>
      <fit-line class="temp" w="29">35°C</fit-line>
      <div class="tray">
        <div class="center">${icon(12, 7, svg`<path d="m.7 6.300 5.300-5.300 5.300 5.300" stroke="#fff" stroke-width="1.200"/>`)}</div>
        <div class="center">${icon(15, 9, svg`<path d="M.5.500h12.500v8H.5zM14.300 3v3" stroke="#fff"/><path d="M2 2h5v5H2z" fill="#fff"/>`)}</div>
        <div class="center">${icon(16, 15, svg`<path d="M5.500 4.500h9.500v7H5M10 11.500v2.500M7 14h6" stroke="#fff"/><path d="M1 4h5v4.500H1z" fill="#fff"/><path d="M2 4V1.500h3V4M3.500 8v6" stroke="#fff"/>`)}</div>
        <div class="center">${icon(12, 16, svg`<rect x=".6" y="4" width="7.500" height="8" rx="1.500" stroke="#fff" stroke-width="1.200"/><path d="m8.500 7 2.500-1.500v5L8.500 9M1.500 2c2-1.500 4.500-1.500 6.500 0M1.500 14c2 1.500 4.500 1.500 6.500 0" stroke="#fff"/><circle cx="4.300" cy="8" r="1.300" stroke="#fff"/>`)}</div>
        <div class="center">${icon(17, 16, svg`<path d="M.5 3.500 15.500.8v9M.5 3.500v10h8" stroke="#fff"/><path d="M4 7.500c1.500-2.500 5-2.500 6 0M10.500 4.500v3H7.500M10 9c-1 2.500-4.500 2.500-6 .5" stroke="#fff"/><circle cx="12.500" cy="12.300" r="3.700" fill="#1c76c9"/>`)}</div>
        <div class="center">${icon(17, 13, svg`<path d="M.6 4.500h2.600L6.500 1.500v10L3.200 8.500H.6zM8.500 4.500c1 1 1 3 0 4M10.800 2.800c2 2 2 5.500 0 7.500M13 1c3 3 3 8 0 11" stroke="#fff"/>`)}</div>
        <div class="center">${icon(14, 14, svg`<path d="M1 9C3 4 8 1 13 1M3.500 11c1.500-4 5-6.700 9.500-6.700M6.500 12c1-2.500 3.500-4.500 6.500-4.500M1 9v4" stroke="#ddd" stroke-width="1.100"/><path d="M9 13c.5-1.700 2-2.700 4-2.700V13z" fill="#fff"/>`)}</div>
      </div>
      <div class="clock"><fit-line w="48">12:36 PM</fit-line><fit-line w="53">4/15/2023</fit-line></div>
      <div class="note">${icon(26, 26, svg`<path d="M0 1h16v13H7l-3.500 3v-3H0z" fill="#fff"/><path d="M2.500 4.500h11M2.500 7.500h11M2.500 10.500h7" stroke="#1d1d1d"/><circle cx="15.500" cy="16.500" r="7.700" fill="#3a3a3a" stroke="#8a8a8a"/><text x="12.800" y="20.500" font-size="11" fill="#fff" font-family="Open Sans">1</text>`)}</div>
      <div class="edge"></div>
    </div>`;
  }
}
